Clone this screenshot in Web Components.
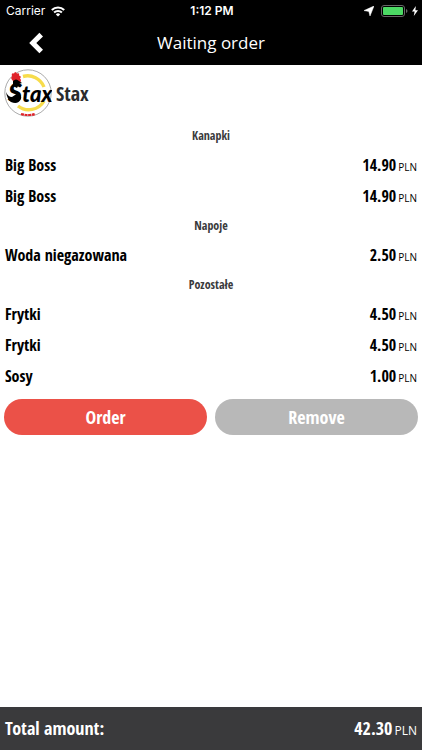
<!DOCTYPE html>
<html lang="en">
<head>
<meta charset="utf-8">
<meta name="viewport" content="width=device-width, initial-scale=1">
<title>Waiting order</title>
<style>
html, body {
    height: 100%;
}
body {
    margin: 0;
    --condensed: "Open Sans Condensed", "Noto Sans Condensed", "Liberation Sans Narrow", "Open Sans", sans-serif;
    --regular: "Open Sans", "Noto Sans", sans-serif;
    --red: #eb5148;
    --grey: #b8b8b8;
    --charcoal: #3a3a3c;
    font-family: var(--condensed);
    color: #000;
    background: #fff;
}
</style>
</head>
<body>
<order-page>
    <status-bar slot="top" carrier="Carrier" time="1:12 PM"></status-bar>
    <nav-bar slot="top">Waiting order</nav-bar>

    <shop-header>Stax</shop-header>
    <order-group name="Kanapki">
        <order-item price="14.90">Big Boss</order-item>
        <order-item price="14.90">Big Boss</order-item>
    </order-group>
    <order-group name="Napoje">
        <order-item price="2.50">Woda niegazowana</order-item>
    </order-group>
    <order-group name="Pozostałe">
        <order-item price="4.50">Frytki</order-item>
        <order-item price="4.50">Frytki</order-item>
        <order-item price="1.00">Sosy</order-item>
    </order-group>
    <order-actions></order-actions>

    <order-total slot="bottom" price="42.30">Total amount:</order-total>
</order-page>

<script>
function define(name, html, setup) {
    const template = document.createElement('template');
    template.innerHTML = html;

    customElements.define(name, class extends HTMLElement {
        constructor() {
            super();
            this.attachShadow({ mode: 'open' });
            this.shadowRoot.appendChild(template.content.cloneNode(true));
        }

        connectedCallback() {
            if (setup) setup(this, this.shadowRoot);
        }
    });
}

define('order-page', `
<style>
:host {
    display: flex;
    flex-direction: column;
    min-height: 100%;
}
header {
    background: #000;
}
main {
    flex: 1;
    padding: 4px 4px 16px;
}
</style>
<header><slot name="top"></slot></header>
<main><slot></slot></main>
<slot name="bottom"></slot>
`);

define('status-bar', `
<style>
:host {
    display: grid;
    grid-template-columns: 1fr auto 1fr;
    align-items: center;
    height: 22px;
    padding: 0 4px 0 6px;
    color: #fff;
    font: 12px/22px Inter, "Liberation Sans", sans-serif;
}
div {
    display: flex;
    align-items: center;
    gap: 6px;
}
#time {
    font-weight: 600;
}
#right {
    justify-content: flex-end;
    gap: 4px;
}
</style>
<div>
    <span id="carrier"></span>
    <svg width="14" height="11" viewBox="0 0 14 11" fill="none" stroke="#fff" stroke-width="2">
        <path d="M.8 4a8.8 8.8 0 0 1 12.4 0M3.1 6.5a5.5 5.5 0 0 1 7.8 0"/>
        <path d="M7 10.6 4.8 8.4a3.1 3.1 0 0 1 4.4 0z" fill="#fff" stroke="none"/>
    </svg>
</div>
<span id="time"></span>
<div id="right">
    <svg width="10" height="10" viewBox="0 0 10 10" fill="#fff"><path d="M10 0 6 10 4.8 5.4 0 4.6z" stroke="#fff" stroke-width=".5"/></svg>
    <svg width="30" height="12" viewBox="0 0 30 12">
        <rect x="3.5" y=".5" width="23" height="11" rx="2.5" fill="none" stroke="#666"/>
        <rect x="5" y="2" width="20" height="8" rx="1" fill="#4cd964"/>
        <path d="M28 4v4q1.5-.6 1.5-2T28 4z" fill="#666"/>
    </svg>
    <svg width="6" height="10" viewBox="0 0 6 10" fill="#fff"><path d="M3.8 0 0 5.6h2.6L1.8 10 6 4.2H3.4z"/></svg>
</div>
`, (el, root) => {
    root.getElementById('carrier').textContent = el.getAttribute('carrier');
    root.getElementById('time').textContent = el.getAttribute('time');
});

define('nav-bar', `
<style>
:host {
    display: grid;
    grid-template-columns: 1fr auto 1fr;
    align-items: center;
    padding: 2px 0 3px;
    color: #fff;
}
button {
    justify-self: start;
    display: flex;
    margin: 0;
    padding: 8px 28px;
    border: 0;
    background: none;
}
h1 {
    margin: 0;
    font: 17px/24px var(--regular);
}
</style>
<button type="button" aria-label="Back">
    <svg width="16" height="22" viewBox="0 0 16 22" fill="#fff"><path d="M11.4.8 15 4.4 8.3 11 15 17.7 11.4 21.2 1.2 11z"/></svg>
</button>
<h1><slot></slot></h1>
`);

define('shop-header', `
<style>
:host {
    display: flex;
    align-items: center;
    gap: 4px;
    padding-bottom: 5px;
}
h2 {
    margin: 0;
    padding-top: 2px;
    color: #2b2b2d;
    font-size: 20px;
    line-height: 28px;
}
</style>
<svg width="48" height="48" viewBox="0 0 48 48" aria-hidden="true">
    <circle cx="24" cy="24" r="23.2" fill="#fff" stroke="#aaa"/>
    <path d="M19 7.5A17.5 17.5 0 0 1 40 18M40 32A17.5 17.5 0 0 1 14 37" fill="none" stroke="#f7dc4b" stroke-width="3.4"/>
    <!-- rooster: comb and beak, head and tail round the first letter -->
    <path d="M9 12Q6 9 8 7.500q-1-4 2-3 1-3 3 0 3-1 2 2 3 1 1 3 2 2 0 4l-2 3-2-4z" fill="#e0242b"/>
    <path d="M9 12q3-3 6 0l3 2-3 1-2 4-4-2z"/>
    <path d="M2 23q2 5 6 5l6-4q4 2 3 6-3 6-10 3Q3 30 2 23z"/>
    <g font-family="Lato, sans-serif" font-style="italic" font-weight="900">
        <text x="4" y="33" font-size="27">S<tspan font-size="22">tax</tspan></text>
    </g>
    <path d="M17 45q7 2 14 0" fill="none" stroke="#e0242b" stroke-width="2.200" stroke-dasharray="3 .6"/>
</svg>
<h2><slot></slot></h2>
`);

define('order-group', `
<style>
:host {
    display: block;
}
h3 {
    margin: 0;
    padding: 4px 0;
    color: #3a3a3c;
    font-size: 12px;
    line-height: 20px;
    text-align: center;
}
</style>
<h3></h3>
<slot></slot>
`, (el, root) => {
    root.querySelector('h3').textContent = el.getAttribute('name');
});

define('price-tag', `
<style>
:host {
    display: flex;
    align-items: baseline;
    gap: 2px;
}
b {
    font-size: 16px;
}
small {
    font: 10px var(--regular);
}
:host([large]) b {
    font-size: 18px;
}
:host([large]) small {
    font-size: 12px;
}
</style>
<b><slot></slot></b><small>PLN</small>
`);

define('order-item', `
<style>
:host {
    display: flex;
    justify-content: space-between;
    align-items: baseline;
    padding: 0 1px;
    font-weight: 700;
    font-size: 16px;
    line-height: 31px;
}
</style>
<span><slot></slot></span>
<price-tag></price-tag>
`, (el, root) => {
    root.querySelector('price-tag').textContent = el.getAttribute('price');
});

define('order-actions', `
<style>
:host {
    display: grid;
    grid-template-columns: 1fr 1fr;
    gap: 8px;
    padding-top: 7px;
}
button {
    height: 36px;
    margin: 0;
    padding: 0;
    border: 0;
    border-radius: 18px;
    background: var(--grey);
    color: #fff;
    font: 700 18px/36px var(--condensed);
}
#order {
    background: var(--red);
}
</style>
<button type="button" id="order">Order</button>
<button type="button" id="remove">Remove</button>
`);

define('order-total', `
<style>
:host {
    display: flex;
    justify-content: space-between;
    align-items: baseline;
    padding: 0 5px;
    background: var(--charcoal);
    color: #fff;
    font-weight: 700;
    font-size: 18px;
    line-height: 43px;
}
</style>
<span><slot></slot></span>
<price-tag large></price-tag>
`, (el, root) => {
    root.querySelector('price-tag').textContent = el.getAttribute('price');
});
</script>
</body>
</html>
